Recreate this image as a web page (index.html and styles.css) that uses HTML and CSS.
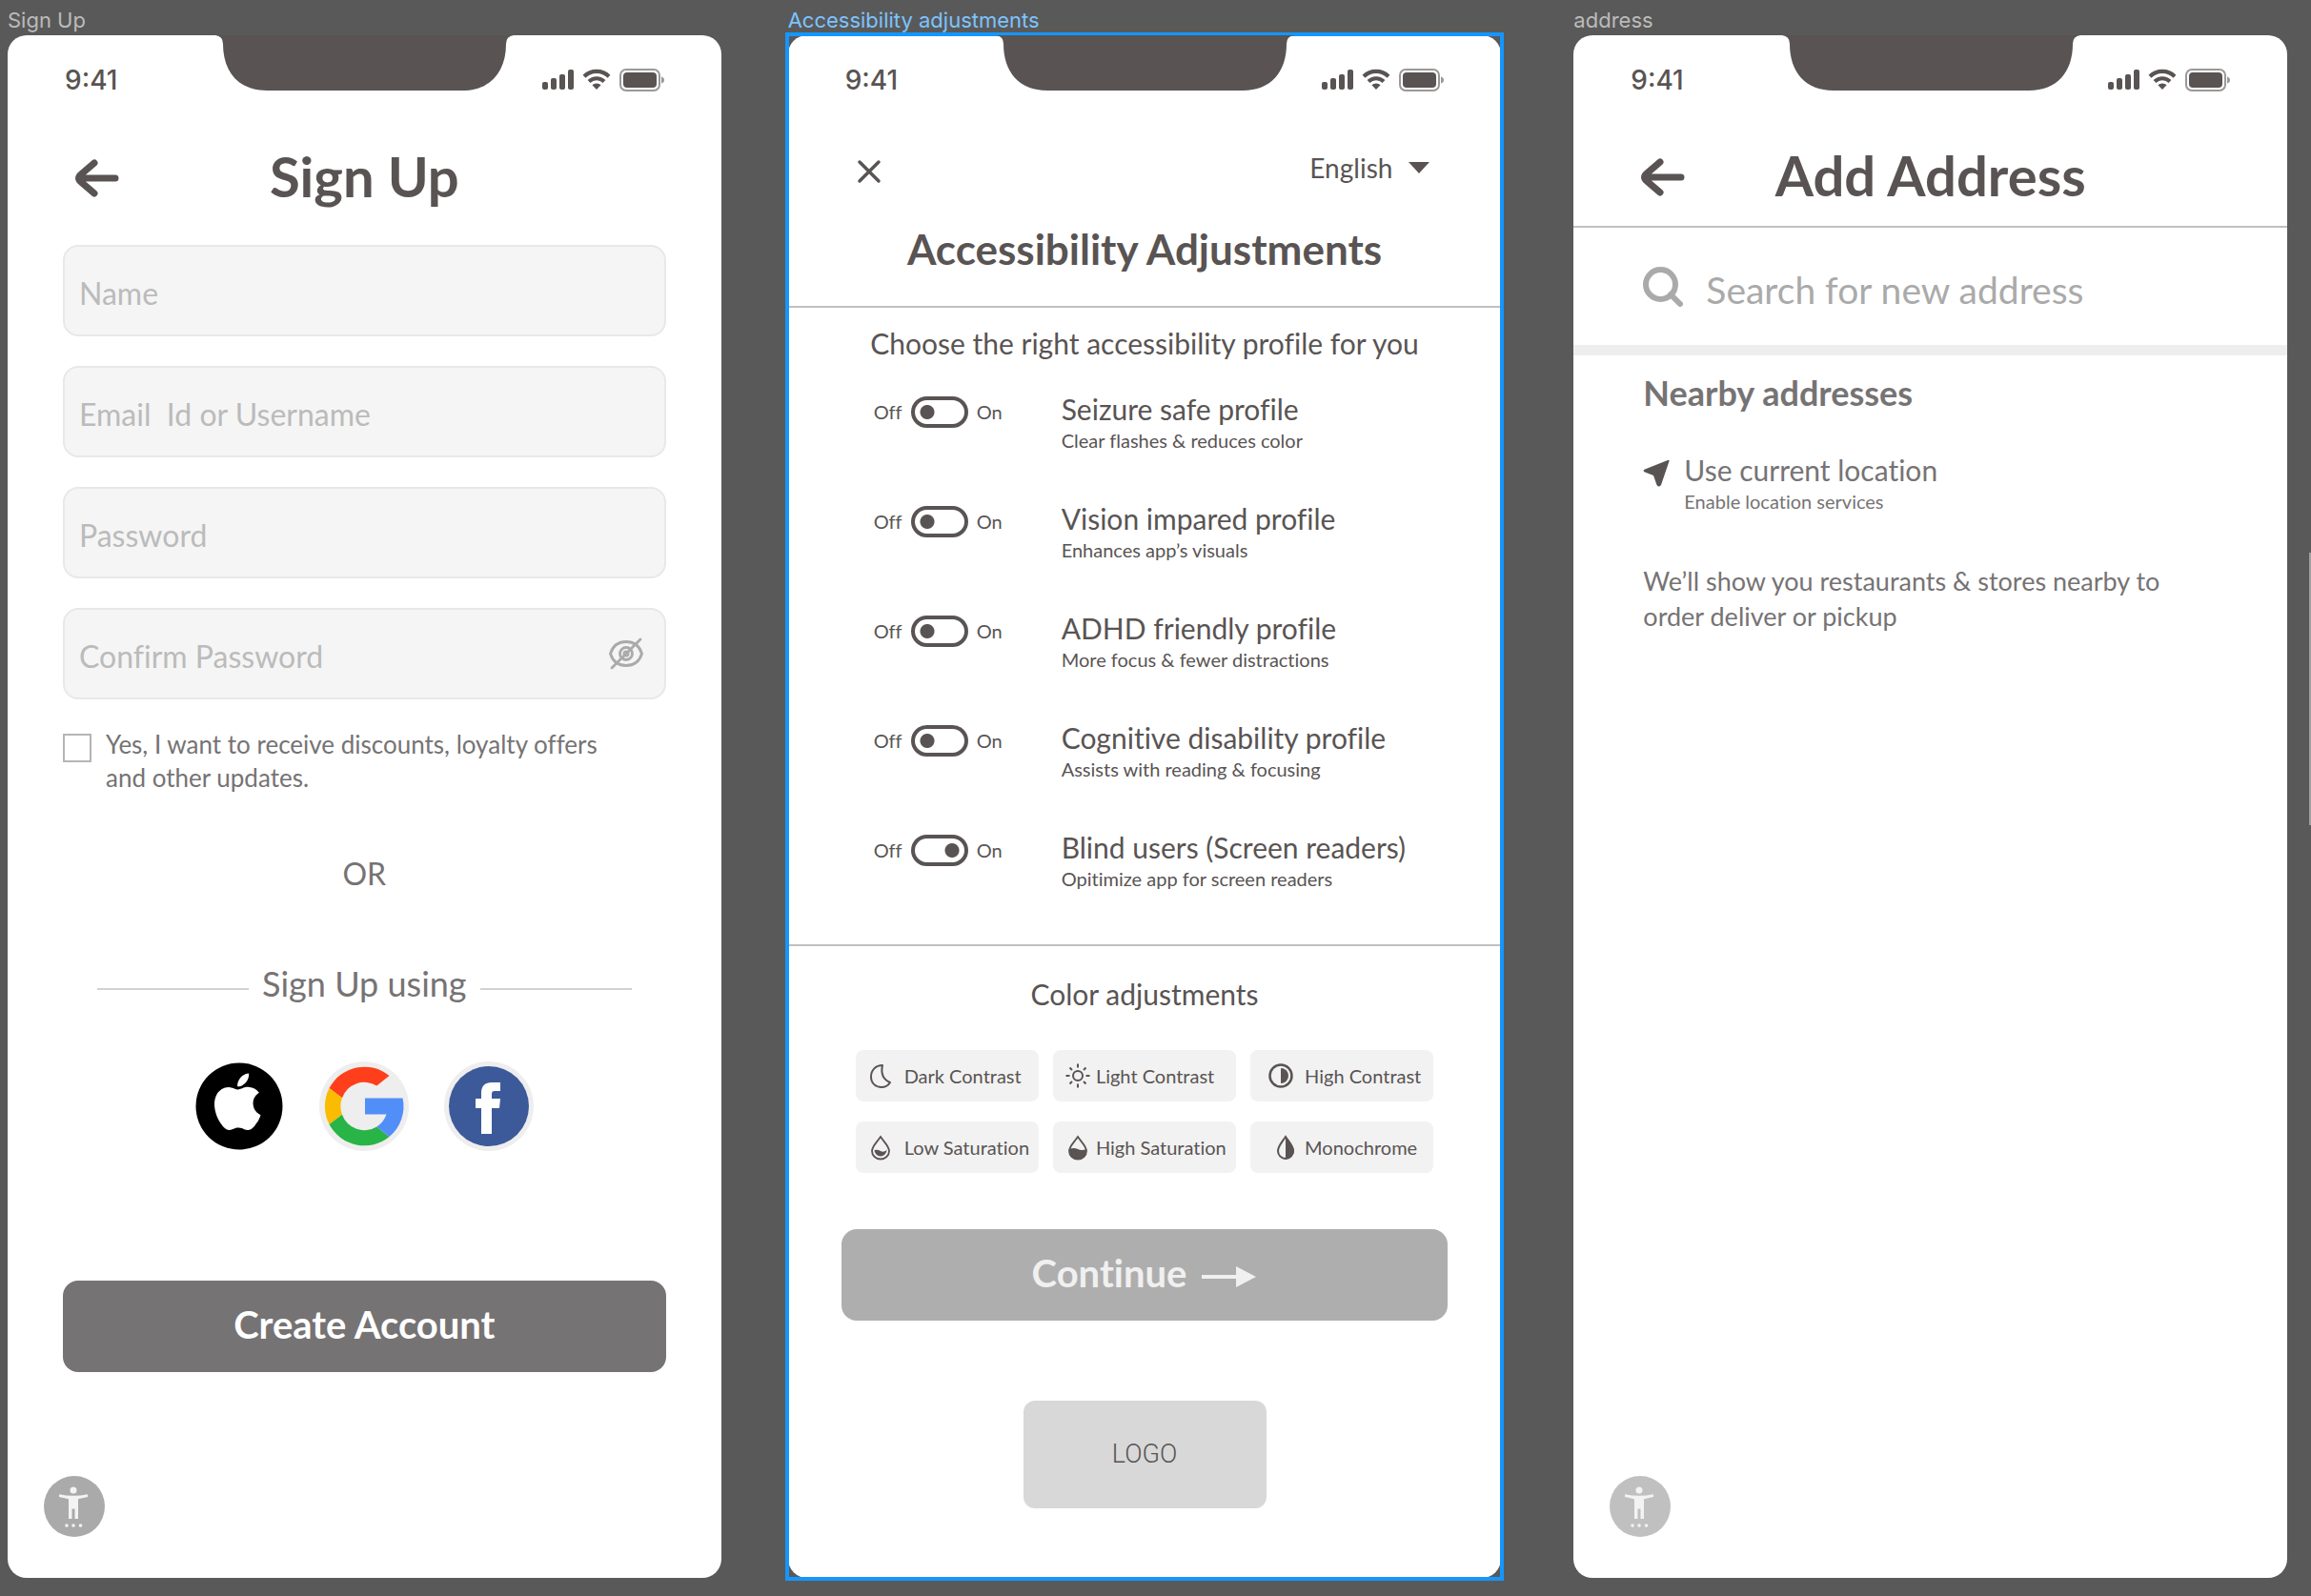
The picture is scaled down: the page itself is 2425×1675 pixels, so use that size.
FILE: index.html
```html
<!DOCTYPE html>
<html lang="en">
<head>
<meta charset="utf-8">
<title>Onboarding screens</title>
<link rel="stylesheet" href="styles.css">
</head>
<body>
<svg class="sprite" aria-hidden="true">
  <symbol id="status" viewBox="0 0 128 24">
    <g fill="currentColor">
      <rect x="0" y="14" width="6" height="8" rx="2"/>
      <rect x="9" y="10" width="6" height="12" rx="2"/>
      <rect x="18" y="6" width="6" height="16" rx="2"/>
      <rect x="27" y="1" width="6" height="21" rx="2"/>
      <path d="M57 22l-4.600-4.800a6.800 6.800 0 0 1 9.200 0z"/>
      <rect x="85" y="4" width="35" height="16" rx="4"/>
    </g>
    <g fill="none" stroke="currentColor">
      <path d="M49 13.500a11.500 11.500 0 0 1 16 0" stroke-width="4"/>
      <path d="M44 8.200a18.500 18.500 0 0 1 26 0" stroke-width="4.200"/>
      <rect x="82" y="1" width="41" height="22" rx="6" stroke-width="2" opacity=".6"/>
    </g>
    <path d="M125 8.500q3 1 3 3.500t-3 3.500z" fill="currentColor" opacity=".6"/>
  </symbol>
  <symbol id="back" viewBox="0 0 48 42">
    <path d="M22 5L8 17Q3 21 8 25L22 37M8 21H44" fill="none" stroke="currentColor" stroke-width="7" stroke-linecap="round" stroke-linejoin="round"/>
  </symbol>
  <symbol id="notch" viewBox="0 0 313 58">
    <path d="M0 0H313Q305 1 305 9C305 38 289 58 259 58H54C24 58 8 38 8 9Q8 1 0 0z" fill="currentColor"/>
  </symbol>
  <symbol id="person" viewBox="0 0 64 64">
    <g fill="#f3f3f3">
      <circle cx="31" cy="15" r="3.500"/>
      <path d="M16 19.200Q31 22.500 46 19.200V22L36 24.200V45H32.500V34.500H29.500V45H26V24.200L16 22z"/>
      <circle cx="24" cy="52" r="1.800"/><circle cx="31" cy="52" r="1.800"/><circle cx="38.500" cy="52" r="1.800"/>
    </g>
  </symbol>
</svg>

<main class="canvas">
  <section class="board board-signup">
    <p class="board-name">Sign Up</p>
    <div class="frame"><div class="screen">
      <div class="status"><svg class="notch"><use href="#notch"/></svg><time>9:41</time><svg class="status-icons"><use href="#status"/></svg></div>
      <header class="header">
        <button class="icon-button" aria-label="Back"><svg class="back"><use href="#back"/></svg></button>
        <h1>Sign Up</h1>
      </header>
      <form class="form">
        <div class="fields">
          <input class="field" type="text" aria-label="Name" placeholder="Name">
          <input class="field" type="text" aria-label="Email Id or Username" placeholder="Email  Id or Username">
          <input class="field" type="password" aria-label="Password" placeholder="Password">
          <div class="field-wrap">
            <input class="field" type="password" aria-label="Confirm Password" placeholder="Confirm Password">
            <button type="button" class="icon-button reveal" aria-label="Show password">
              <svg width="38" height="36" viewBox="0 0 38 36" fill="none" stroke="#aaa" stroke-width="2.800" stroke-linecap="round"><path d="M2.500 18C5 10 11 5.500 19 5.500S33 10 35.500 18C33 26 27 30.500 19 30.500S5 26 2.500 18z"/><circle cx="19" cy="18" r="6.500"/><circle cx="19" cy="18" r="2.500" stroke-width="2"/><path d="M4 33L34 3"/></svg>
            </button>
          </div>
        </div>
        <label class="consent"><input type="checkbox"><span>Yes, I want to receive discounts, loyalty offers and other updates.</span></label>
        <p class="or">OR</p>
        <p class="using">Sign Up using</p>
        <div class="socials">
          <button type="button" class="icon-button" aria-label="Apple">
            <svg width="94" height="94" viewBox="0 0 94 94"><circle cx="47" cy="47" r="45.500"/><path transform="translate(15.500 12.500) scale(2.480)" fill="#fff" d="M12.152 6.896c-.948 0-2.415-1.078-3.960-1.040-2.040.027-3.910 1.183-4.961 3.014-2.117 3.675-.546 9.103 1.519 12.090 1.013 1.454 2.208 3.090 3.792 3.039 1.520-.065 2.090-.987 3.935-.987 1.831 0 2.350.987 3.960.948 1.637-.026 2.676-1.480 3.676-2.948 1.156-1.688 1.636-3.325 1.662-3.415-.039-.013-3.182-1.221-3.220-4.857-.026-3.040 2.480-4.494 2.597-4.559-1.429-2.090-3.623-2.324-4.390-2.376-2-.156-3.675 1.090-4.610 1.090zM15.530 3.830c.843-1.012 1.400-2.427 1.245-3.830-1.207.052-2.662.805-3.532 1.818-.780.896-1.454 2.338-1.273 3.714 1.338.104 2.715-.688 3.559-1.701"/></svg>
          </button>
          <button type="button" class="icon-button" aria-label="Google">
            <svg width="94" height="94" viewBox="0 0 94 94"><circle cx="47" cy="47" r="47" fill="#eee"/><g transform="translate(47 47)"><path fill="#ff3f1b" d="M26.500-32A41.500 41.500 0 0 0-36.500-19L-23-8.700A24.600 24.600 0 0 1 13.300-21.500z"/><path fill="#fbbb00" d="M-36.500-19A41.500 41.500 0 0 0-36.500 19L-23 8.700A24.600 24.600 0 0 1-23-8.700z"/><path fill="#28b446" d="M-36.500 19A41.500 41.500 0 0 0 26.500 32L13.300 21.500A24.600 24.600 0 0 1-23 8.700z"/><path fill="#518ef8" d="M1-8.500H40.600A41.500 41.500 0 0 1 26.500 32L13.300 21.500A24.600 24.600 0 0 0 23.500 8.500H1z"/></g></svg>
          </button>
          <button type="button" class="icon-button" aria-label="Facebook">
            <svg width="94" height="94" viewBox="0 0 94 94"><circle cx="47" cy="47" r="47" fill="#eee"/><circle cx="47" cy="47" r="42" fill="#3c5a99"/><path fill="#fff" d="M39 76V49H33V39H39V33Q39 22 50 22H59V31H53Q50 31 50 34V39H59L58 49H50V76z"/></svg>
          </button>
        </div>
        <button class="primary">Create Account</button>
      </form>
      <button class="icon-button access" aria-label="Accessibility"><svg width="64" height="64"><use href="#person"/></svg></button>
    </div></div>
  </section>

  <section class="board board-access">
    <p class="board-name">Accessibility adjustments</p>
    <div class="frame"><div class="screen">
      <div class="status"><svg class="notch"><use href="#notch"/></svg><time>9:41</time><svg class="status-icons"><use href="#status"/></svg></div>
      <div class="topline">
        <button class="icon-button close" aria-label="Close"><svg width="26" height="26" viewBox="0 0 26 26" fill="none" stroke="currentColor" stroke-width="3.500" stroke-linecap="round"><path d="M3 3L23 23M23 3L3 23"/></svg></button>
        <div class="language"><select aria-label="Language"><option>English</option></select><svg width="22" height="12" viewBox="0 0 22 12"><path d="M0 0H22L11 12z" fill="currentColor"/></svg></div>
      </div>
      <h1 class="title">Accessibility Adjustments</h1>
      <section class="profiles">
        <h2>Choose the right accessibility profile for you</h2>
        <ul>
          <li><div class="switch"><span>Off</span><input type="checkbox" id="p1"><span>On</span></div><label for="p1"><b>Seizure safe profile</b><small>Clear flashes &amp; reduces color</small></label></li>
          <li><div class="switch"><span>Off</span><input type="checkbox" id="p2"><span>On</span></div><label for="p2"><b>Vision impared profile</b><small>Enhances app’s visuals</small></label></li>
          <li><div class="switch"><span>Off</span><input type="checkbox" id="p3"><span>On</span></div><label for="p3"><b>ADHD friendly profile</b><small>More focus &amp; fewer distractions</small></label></li>
          <li><div class="switch"><span>Off</span><input type="checkbox" id="p4"><span>On</span></div><label for="p4"><b>Cognitive disability profile</b><small>Assists with reading &amp; focusing</small></label></li>
          <li><div class="switch"><span>Off</span><input type="checkbox" id="p5" checked><span>On</span></div><label for="p5"><b>Blind users (Screen readers)</b><small>Opitimize app for screen readers</small></label></li>
        </ul>
      </section>
      <section class="colors">
        <h2>Color adjustments</h2>
        <div class="chips">
          <button><svg width="28" height="28" viewBox="0 0 28 28" fill="none" stroke="currentColor" stroke-width="2" stroke-linejoin="round"><path d="M16 3C9 3 4 8 4 15S9 26 15 26Q21 26 24 21C17 18 14 12 16 3z"/></svg>Dark Contrast</button>
          <button><svg width="28" height="28" viewBox="0 0 28 28" fill="none" stroke="currentColor" stroke-width="2"><circle cx="14" cy="14" r="5"/><path d="M14 1.500V5.500M14 22.500V26.500M1.500 14H5.500M22.500 14H26.500M5.500 5.500L8 8M20 20L22.500 22.500M22.500 5.500L20 8M8 20L5.500 22.500"/></svg>Light Contrast</button>
          <button><svg width="28" height="28" viewBox="0 0 28 28"><circle cx="14" cy="14" r="11.500" fill="none" stroke="currentColor" stroke-width="2.500"/><path d="M14 6A8 8 0 0 1 14 22z" fill="currentColor"/></svg>High Contrast</button>
          <button><svg width="28" height="28" viewBox="0 0 28 28"><path d="M14 3C10 9 5 13 5 18A9 8.500 0 0 0 23 18C23 13 18 9 14 3z" fill="none" stroke="currentColor" stroke-width="1.800"/><path d="M7.500 17Q11 16 14 18T20.500 17A6.500 6.500 0 0 1 7.500 17z" fill="currentColor"/></svg>Low Saturation</button>
          <button><svg width="28" height="28" viewBox="0 0 28 28"><path d="M14 3C10 9 5 13 5 18A9 8.500 0 0 0 23 18C23 13 18 9 14 3z" fill="none" stroke="currentColor" stroke-width="1.800"/><path d="M5 16Q10 14 14 16T23 16V19A9 8 0 0 1 5 19z" fill="currentColor"/></svg>High Saturation</button>
          <button><svg width="28" height="28" viewBox="0 0 28 28"><g transform="translate(5 0)"><path d="M14 3C10 9 6 13 6 18A8 8 0 0 0 22 18C22 13 18 9 14 3z" fill="none" stroke="currentColor" stroke-width="2"/><path d="M14 2C18 9 23 13 23 18A9 9 0 0 1 14 26.500z" fill="currentColor"/></g></svg>Monochrome</button>
        </div>
        <button class="primary continue">Continue<svg width="58" height="24" viewBox="0 0 58 24" fill="currentColor"><path d="M0 10H36V1L57 12L36 23V14H0z"/></svg></button>
      </section>
      <div class="logo">LOGO</div>
    </div></div>
  </section>

  <section class="board board-address">
    <p class="board-name">address</p>
    <div class="frame"><div class="screen">
      <div class="status"><svg class="notch"><use href="#notch"/></svg><time>9:41</time><svg class="status-icons"><use href="#status"/></svg></div>
      <header class="header ruled">
        <button class="icon-button" aria-label="Back"><svg class="back"><use href="#back"/></svg></button>
        <h1>Add Address</h1>
      </header>
      <label class="search">
        <svg width="42" height="42" viewBox="0 0 42 42" fill="none" stroke="#aaa" stroke-width="6"><circle cx="18.500" cy="18.500" r="15.500"/><path d="M29 29L39 39" stroke-linecap="round"/></svg>
        <input type="search" aria-label="Search for new address" placeholder="Search for new address">
      </label>
      <section class="nearby">
        <h2>Nearby addresses</h2>
        <a class="locate" href="#">
          <svg width="28" height="30" viewBox="0 0 28 30"><path d="M26 1Q28 0 27.500 2L19 27Q16.500 30 14.500 27L11 17L2 13.500Q-1 12 2 10.500z" fill="#595453"/></svg>
          <span><b>Use current location</b><small>Enable location services</small></span>
        </a>
        <p>We’ll show you restaurants &amp; stores nearby to order deliver or pickup</p>
      </section>
      <button class="icon-button access" aria-label="Accessibility"><svg width="64" height="64"><use href="#person"/></svg></button>
    </div></div>
  </section>
  <div class="next-board"></div>
</main>
</body>
</html>
```
FILE: styles.css
```css
* { box-sizing: border-box; }

:root {
  --ink: #595453;
  --muted: #767374;
  --line: #c0c0c0;
}

body {
  margin: 0;
  background: #595959;
  color: var(--ink);
  font-family: Lato, "Open Sans", sans-serif;
  font-variant-ligatures: none;
}

h1, h2, p, ul { margin: 0; padding: 0; }
h1, h2 { font-size: inherit; font-weight: inherit; }
ul { list-style: none; }
b, small { display: block; font-weight: 400; }
button, input, select { font: inherit; color: inherit; border: 0; margin: 0; padding: 0; background: none; }
svg { display: block; flex: none; }
.sprite { position: absolute; width: 0; height: 0; }
.icon-button { display: block; border-radius: 50%; }

/* canvas and artboards */
.canvas {
  position: relative;
  display: flex;
  min-height: 100vh;
  padding: 0 25px 19px 8px;
}
.board { display: flex; flex: 1 1 0; min-width: 0; flex-direction: column; }
.board-signup { margin-right: 70px; }
.board-access { margin-right: 76px; }
.board-name {
  height: 37px;
  padding-top: 4px;
  color: #bbb;
  font: 22px/34px Inter, sans-serif;
}
.board-access .board-name { color: #7cc4ff; }
.frame { display: flex; flex: 1; }
.board-access .frame { outline: 4px solid #1596ff; outline-offset: -1px; }
.screen {
  display: flex;
  flex: 1;
  min-width: 0;
  flex-direction: column;
  background: #fff;
  border-radius: 20px;
}
/* left edge of the artboard that continues beyond the canvas */
.next-board {
  position: absolute;
  top: 580px;
  right: 0;
  width: 2px;
  height: 286px;
  background: #a0a0a0;
}

/* status bar */
.status {
  position: relative;
  display: flex;
  height: 94px;
  align-items: center;
  justify-content: space-between;
  padding: 0 60px;
  font: 500 28px/34px Inter, sans-serif;
}
.status-icons { width: 128px; height: 24px; }
.notch {
  position: absolute;
  top: 0;
  left: 50%;
  width: 313px;
  height: 58px;
  margin-left: -156px;
}

.header {
  display: grid;
  height: 108px;
  grid-template-columns: 1fr auto 1fr;
  align-items: center;
  padding: 0 69px;
  font-size: 58px;
  font-weight: 700;
  line-height: 64px;
}
.header.ruled { border-bottom: 2px solid var(--line); }
.header .icon-button { margin-top: 4px; }
.back { width: 48px; height: 42px; }

/* sign up */
.form { display: flex; flex-direction: column; padding: 18px 58px 0; color: var(--muted); }
.fields { display: grid; gap: 31px; }
.field {
  width: 100%;
  height: 96px;
  padding: 4px 15px 0;
  border: 2px solid #e8e8e8;
  border-radius: 16px;
  background: #f5f5f5;
  font-size: 32px;
}
::placeholder { color: #bbb; opacity: 1; }
.field-wrap { position: relative; }
.reveal { position: absolute; top: 30px; right: 23px; }
.consent {
  display: flex;
  gap: 15px;
  margin-top: 30px;
  padding-right: 60px;
  font-size: 26px;
  line-height: 35px;
}
.consent input {
  width: 30px;
  height: 30px;
  flex: none;
  margin-top: 6px;
  appearance: none;
  border: 2px solid #b5b5b5;
}
.or { margin-top: 63px; font-size: 32px; line-height: 40px; text-align: center; }
.using {
  display: flex;
  align-items: center;
  gap: 14px;
  margin: 73px 36px 0;
  font-size: 36px;
  line-height: 44px;
}
.using::before, .using::after { content: ""; height: 2px; flex: 1; margin-top: 12px; background: #d2d2d2; }
.socials { display: flex; justify-content: center; gap: 37px; margin-top: 60px; }
.primary {
  height: 96px;
  padding-bottom: 4px;
  border-radius: 16px;
  background: var(--muted);
  color: #fff;
  font-size: 40px;
  font-weight: 700;
}
.form .primary { margin-top: 136px; }
.access { margin: auto 0 43px 38px; align-self: flex-start; background: #aaa; }
.board-address .access { background: #c0c0c0; }

/* accessibility adjustments */
.topline {
  display: flex;
  height: 90px;
  align-items: center;
  justify-content: space-between;
  padding: 0 75px 0 72px;
}
.close { margin-top: 8px; }
.language { display: flex; align-items: center; gap: 16px; font-size: 28px; }
.language select { appearance: none; }
.title {
  padding: 10px 0 30px;
  border-bottom: 2px solid var(--line);
  font-size: 44px;
  font-weight: 700;
  line-height: 60px;
  text-align: center;
}
.profiles { padding: 17px 0 55px; border-bottom: 2px solid var(--line); }
.profiles h2, .colors h2 { font-size: 30px; line-height: 40px; text-align: center; }
.profiles ul { display: grid; gap: 49px; margin-top: 30px; padding-left: 90px; }
.profiles li { display: grid; grid-template-columns: 197px 1fr; align-items: start; }
.profiles b { font-size: 30px; line-height: 38px; }
.profiles small { font-size: 20px; line-height: 28px; }
.switch { display: flex; height: 44px; align-items: center; gap: 9px; font-size: 20px; }
.switch input {
  width: 60px;
  height: 33px;
  appearance: none;
  border: 4px solid var(--ink);
  border-radius: 17px;
  background: radial-gradient(circle at 13px 50%, var(--ink) 7px, transparent 8px);
}
.switch input:checked { background: radial-gradient(circle at 39px 50%, var(--ink) 7px, transparent 8px); }
.colors { display: flex; flex-direction: column; padding: 30px 56px 0; }
.chips {
  display: grid;
  grid-template-columns: repeat(3, 1fr);
  gap: 21px 15px;
  margin: 39px 15px 59px;
}
.chips button {
  display: flex;
  height: 54px;
  align-items: center;
  gap: 5px;
  padding-left: 12px;
  border-radius: 8px;
  background: #f2f2f2;
  font-size: 20px;
  white-space: nowrap;
}
.chips button:nth-child(3n + 1) { gap: 11px; }
.chips button:nth-child(3n) { gap: 11px; padding-left: 18px; }
.chips svg { overflow: visible; }
.continue {
  display: flex;
  align-items: center;
  justify-content: center;
  gap: 16px;
  background: #aeaeae;
  color: #f0f0f0;
}
.continue svg { margin-top: 8px; }
.logo {
  width: 255px;
  margin: 84px auto 0;
  border-radius: 12px;
  background: #d8d8d8;
  font: 300 27px/113px Roboto, sans-serif;
  text-align: center;
}

/* address */
.search {
  display: flex;
  height: 134px;
  align-items: center;
  gap: 24px;
  padding: 0 73px;
  border-bottom: 11px solid #eee;
}
.search input { min-width: 0; flex: 1; padding-top: 6px; font-size: 39px; appearance: none; outline: 0; }
.search input::placeholder { color: #aaa; }
.nearby { padding: 17px 73px 0; color: var(--muted); }
.nearby h2 { font-size: 36px; font-weight: 700; line-height: 44px; }
.locate { display: flex; gap: 15px; margin-top: 40px; color: inherit; text-decoration: none; }
.locate svg { margin-top: 8px; }
.locate b { font-size: 30px; line-height: 38px; }
.locate small { font-size: 20px; line-height: 28px; }
.nearby p { max-width: 590px; margin-top: 51px; font-size: 27px; line-height: 37px; }
```
